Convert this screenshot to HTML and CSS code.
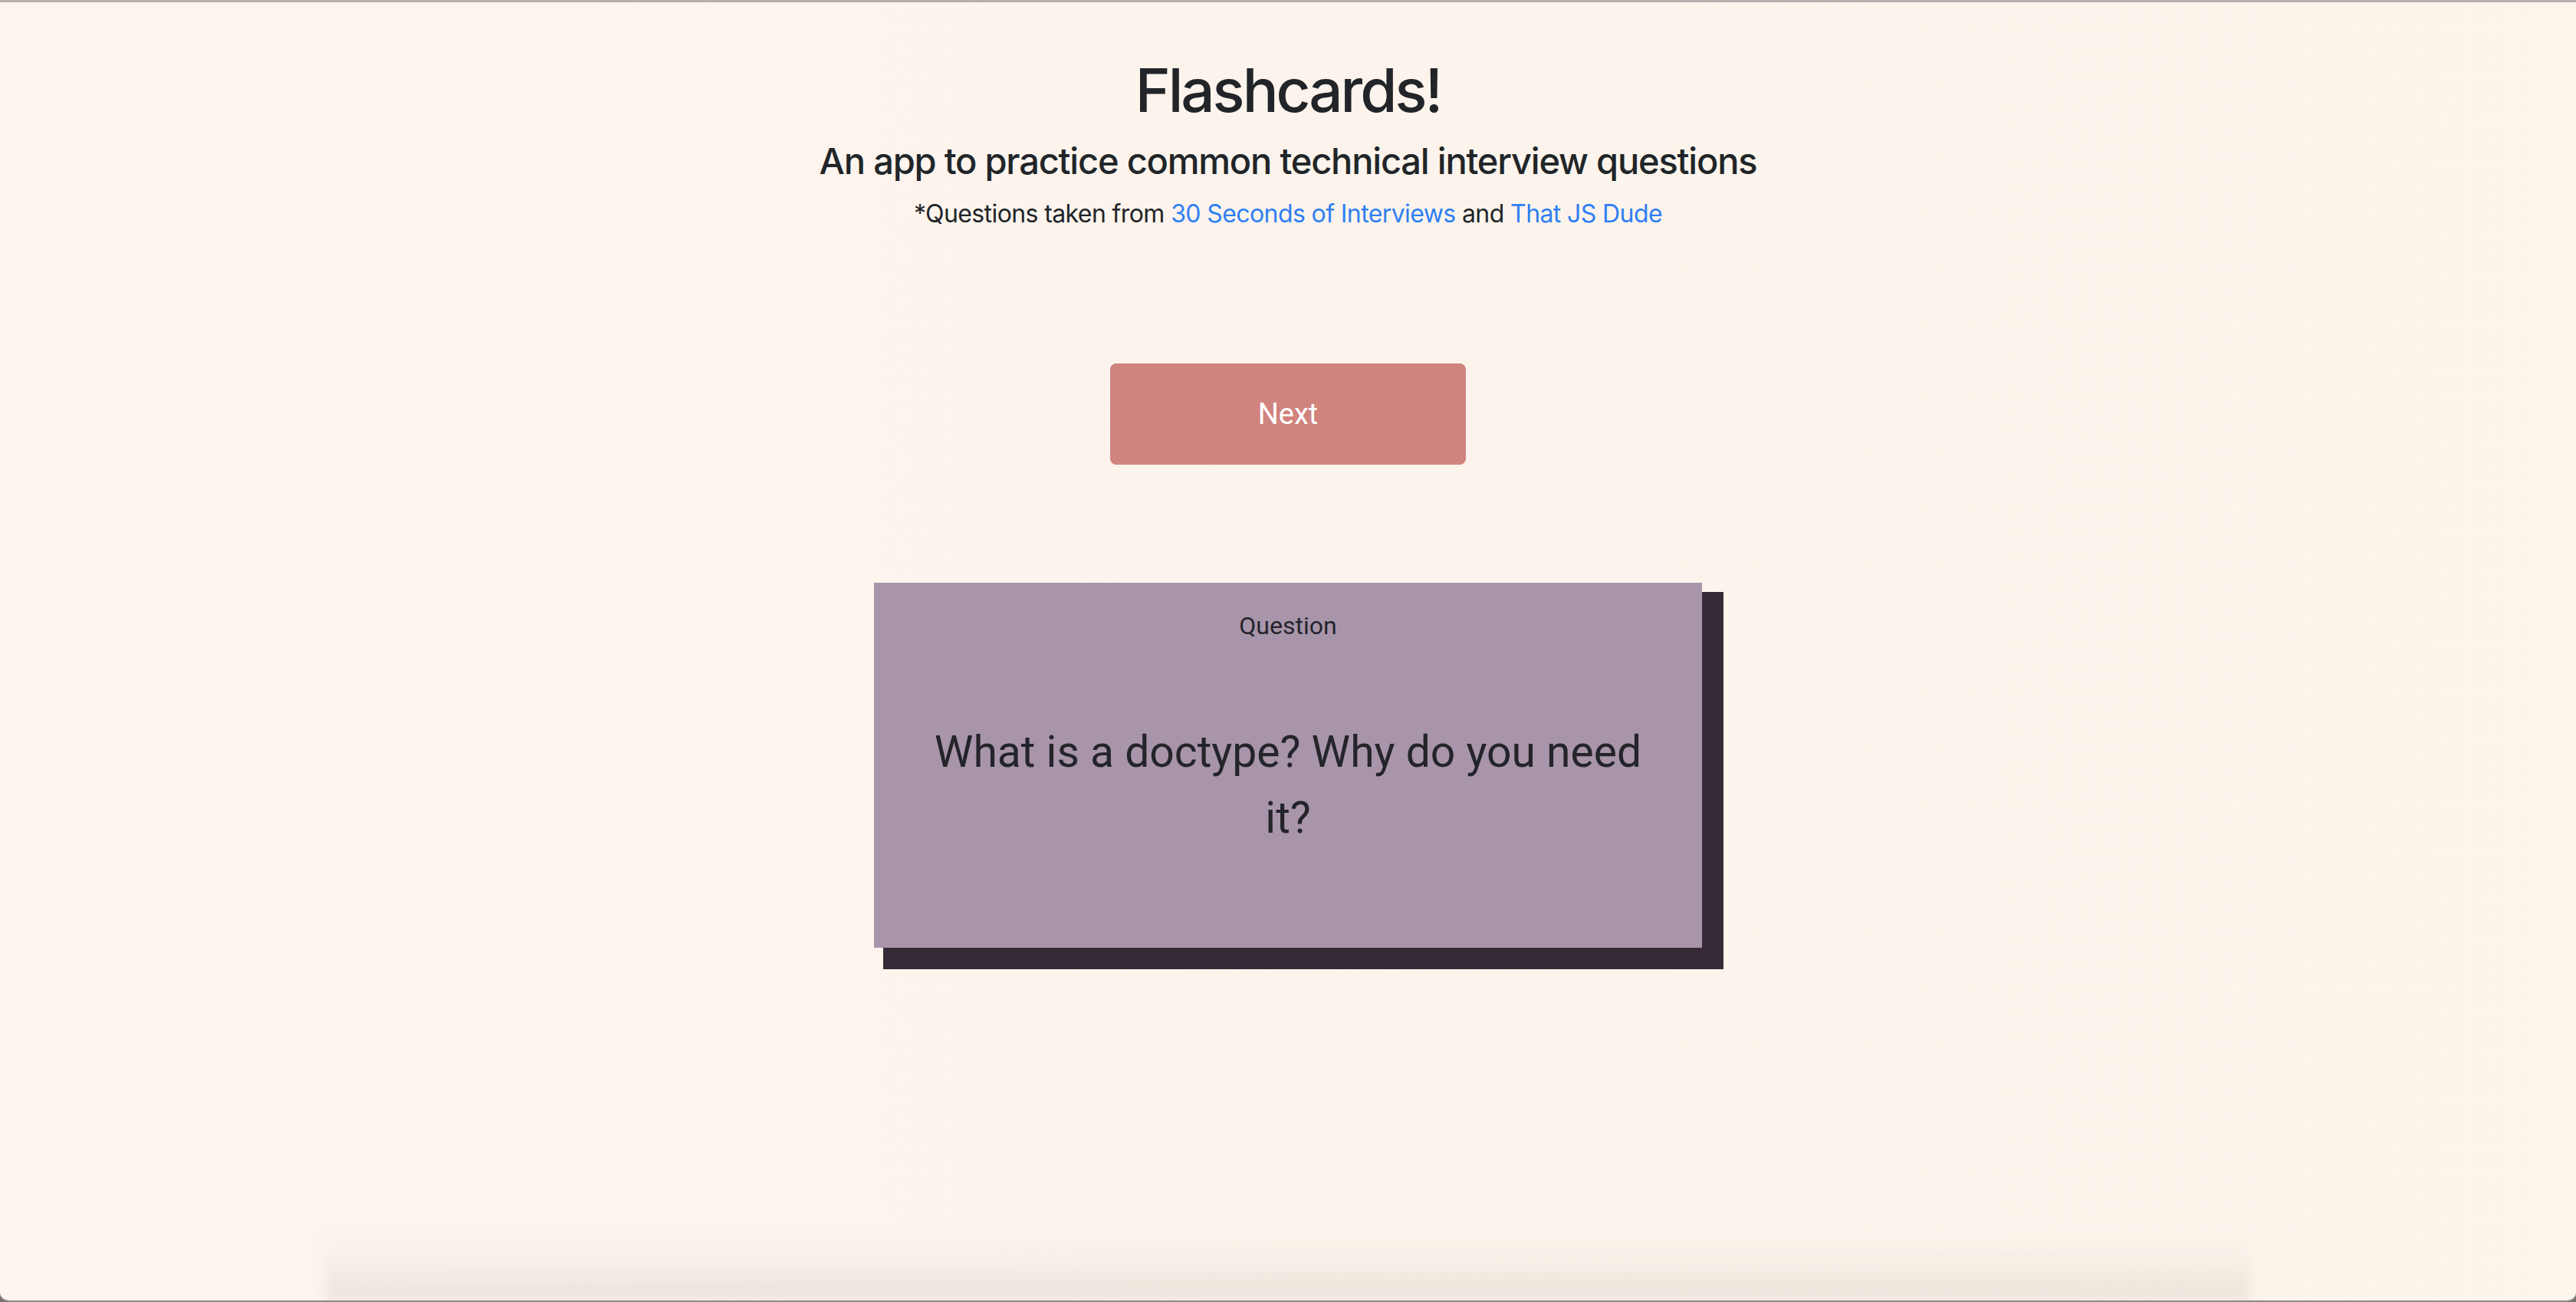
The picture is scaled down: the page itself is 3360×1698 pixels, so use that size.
FILE: index.html
```html
<!DOCTYPE html>
<html lang="en">
<head>
<meta charset="utf-8">
<title>Flashcards!</title>
<link rel="stylesheet" href="styles.css">
</head>
<body>
<div class="window">
  <header class="header">
    <h1 class="title">Flashcards!</h1>
    <h4 class="subtitle">An app to practice common technical interview questions</h4>
    <p class="credit">*Questions taken from <a href="#">30 Seconds of Interviews</a> and <a href="#">That JS Dude</a></p>
  </header>
  <main class="main">
    <button class="next-btn" type="button">Next</button>
    <div class="card">
      <div class="card-label">Question</div>
      <div class="card-body">What is a doctype? Why do you need it?</div>
    </div>
  </main>
  <div class="bottom-shade"></div>
</div>
</body>
</html>
```
FILE: styles.css
```css
html, body {
  margin: 0;
  padding: 0;
  height: 100%;
}
html {
  background: #767372;
}
body {
  font-family: Inter, "Liberation Sans", sans-serif;
  color: #212529;
}
.window {
  min-height: 100vh;
  box-sizing: border-box;
  border-top: 3px solid #b4afac;
  border-bottom: 2px solid #8d8987;
  border-radius: 0 0 12px 12px;
  overflow: hidden;
  display: flex;
  flex-direction: column;
  align-items: center;
  background: linear-gradient(90deg, #fdf4ef 0%, #fcf4ec 50%, #fcf5ec 100%);
}
.header {
  display: flex;
  flex-direction: column;
  align-items: center;
  padding-top: 68px;
}
.title {
  margin: 0;
  font-size: 78px;
  line-height: 94px;
  font-weight: 500;
  letter-spacing: -3px;
}
.subtitle {
  margin: 17px 0 0;
  font-size: 47px;
  line-height: 56px;
  font-weight: 500;
  letter-spacing: -1.2px;
}
.credit {
  margin: 17px 0 0;
  font-size: 32px;
  line-height: 48px;
  letter-spacing: -0.6px;
}
.credit a {
  color: #2f7ff4;
  text-decoration: none;
}
.main {
  display: flex;
  flex-direction: column;
  align-items: center;
  padding-top: 171px;
}
.next-btn {
  width: 464px;
  height: 132px;
  border: none;
  border-radius: 8px;
  background: #d1837d;
  color: #ffffff;
  font-family: Roboto, "Liberation Sans", sans-serif;
  font-size: 38px;
  display: flex;
  align-items: center;
  justify-content: center;
  padding: 0;
}
.card {
  margin-top: 154px;
  width: 1080px;
  height: 476px;
  box-sizing: border-box;
  padding: 32px 60px 0;
  background: #a895aa;
  box-shadow: 20px 20px 0 8px #362a37;
  text-align: center;
  font-family: Roboto, "Liberation Sans", sans-serif;
  color: #24242b;
}
.card-label {
  font-size: 32px;
  line-height: 48px;
}
.card-body {
  margin-top: 98px;
  font-size: 57px;
  line-height: 86px;
}
.bottom-shade {
  margin-top: auto;
  width: 2510px;
  height: 90px;
  background: linear-gradient(180deg, rgba(200,190,180,0) 0%, rgba(200,190,180,0.1) 45%, rgba(190,180,170,0.28) 100%);
  filter: blur(8px);
}
```
